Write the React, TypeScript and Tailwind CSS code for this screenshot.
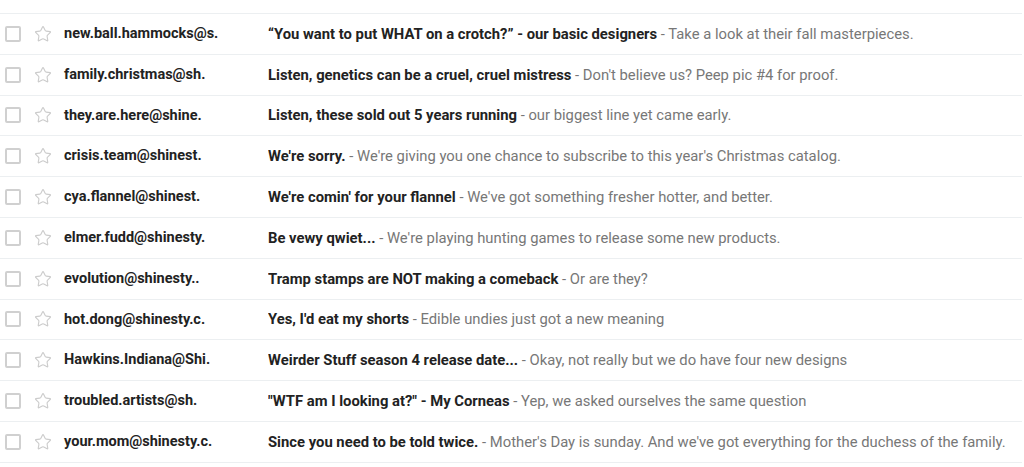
import { Star } from 'lucide-react';

const rows = [
  { from: 'new.ball.hammocks@s.', subject: '\u201cYou want to put WHAT on a crotch?\u201d - our basic designers', snippet: 'Take a look at their fall masterpieces.' },
  { from: 'family.christmas@sh.', subject: 'Listen, genetics can be a cruel, cruel mistress', snippet: "Don't believe us? Peep pic #4 for proof." },
  { from: 'they.are.here@shine.', subject: 'Listen, these sold out 5 years running', snippet: 'our biggest line yet came early.' },
  { from: 'crisis.team@shinest.', subject: "We're sorry.", snippet: "We're giving you one chance to subscribe to this year's Christmas catalog." },
  { from: 'cya.flannel@shinest.', subject: "We're comin' for your flannel", snippet: "We've got something fresher hotter, and better." },
  { from: 'elmer.fudd@shinesty.', subject: 'Be vewy qwiet...', snippet: "We're playing hunting games to release some new products." },
  { from: 'evolution@shinesty..', subject: 'Tramp stamps are NOT making a comeback', snippet: 'Or are they?' },
  { from: 'hot.dong@shinesty.c.', subject: "Yes, I'd eat my shorts", snippet: 'Edible undies just got a new meaning' },
  { from: 'Hawkins.Indiana@Shi.', subject: 'Weirder Stuff season 4 release date...', snippet: 'Okay, not really but we do have four new designs' },
  { from: 'troubled.artists@sh.', subject: '"WTF am I looking at?" - My Corneas', snippet: 'Yep, we asked ourselves the same question' },
  { from: 'your.mom@shinesty.c.', subject: 'Since you need to be told twice.', snippet: "Mother's Day is sunday. And we've got everything for the duchess of the family." },
];

export default function App() {
  return (
    <div className="w-[1024px] h-[467px] overflow-hidden bg-white pt-[13px] font-['Roboto',sans-serif] text-[14.8px]">
      <ul className="border-t border-[#eceff1] mr-[2px]">
        {rows.map((r) => (
          <li key={r.from} className="h-[40.8px] border-b border-[#eceff1] flex items-center">
            <span className="ml-[5px] w-[16px] h-[16px] border-2 border-[#d0d0d0] rounded-[2px] shrink-0" />
            <Star size={18} strokeWidth={1.5} className="ml-[13px] text-[#cccccc] shrink-0" />
            <span className="ml-[12px] w-[204px] shrink-0 font-bold text-[#222] text-[14.5px]">{r.from}</span>
            <span className="truncate">
              <span className="font-bold text-[#222]">{r.subject}</span>
              <span className="text-[#777]"> - {r.snippet}</span>
            </span>
          </li>
        ))}
      </ul>
    </div>
  );
}
